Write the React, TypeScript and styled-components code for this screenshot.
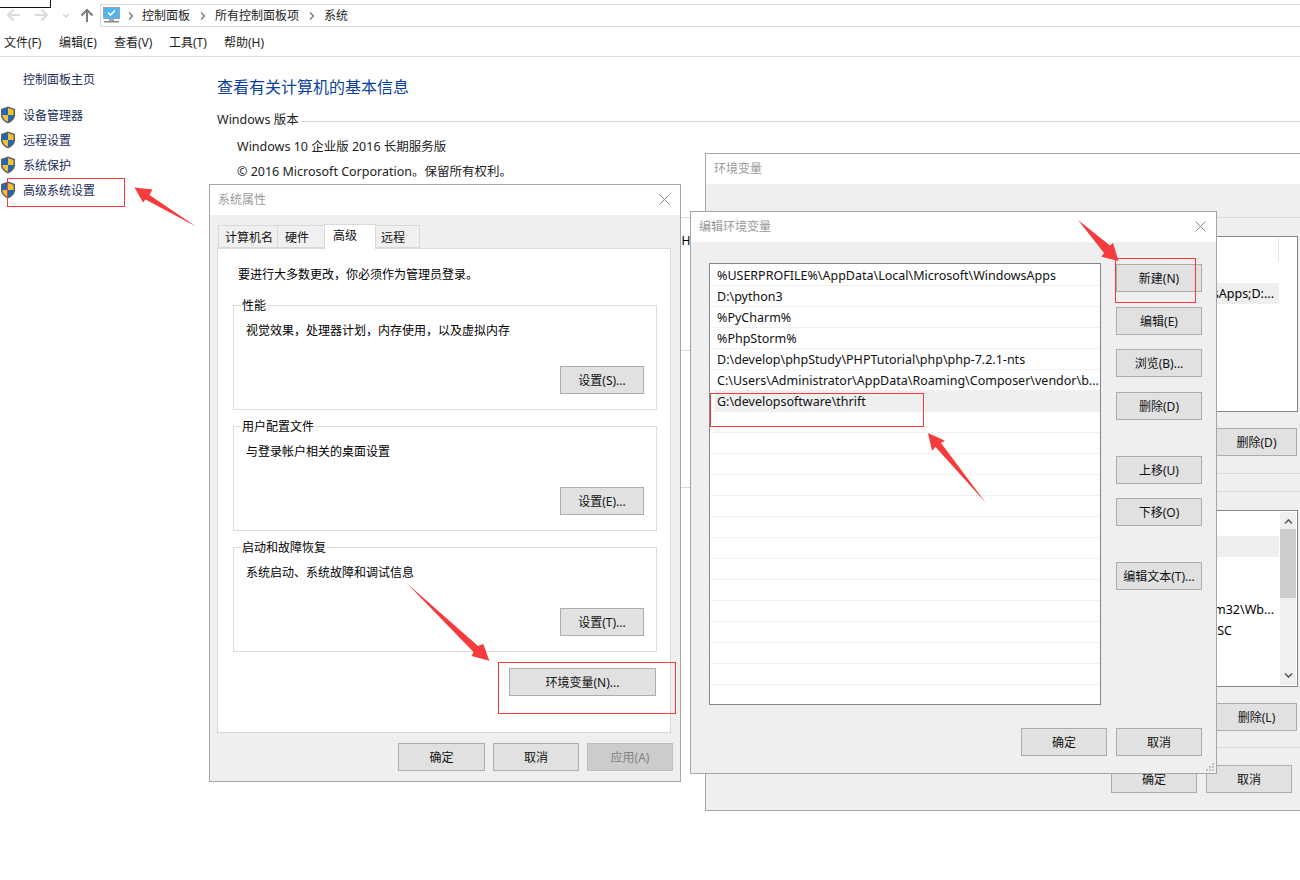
import React from "react";
import styled, { createGlobalStyle } from "styled-components";

const Global = createGlobalStyle`
  html, body { margin: 0; padding: 0; background: #fff; }
  body { font-family: "Noto Sans", "Noto Sans CJK SC", sans-serif; font-size: 12px; color: #000; }
  * { box-sizing: border-box; }
`;

const Page = styled.div`
  position: relative;
  width: 1300px;
  height: 880px;
  overflow: hidden;
  background: #fff;
`;

const Fragment = styled.div`
  position: absolute;
  left: -1px;
  top: -1px;
  width: 52px;
  height: 9px;
  border: 1px solid #111;
`;

const NavBar = styled.div`
  display: flex;
  align-items: center;
  height: 27px;
  padding-left: 5px;
`;

const NavIcons = styled.div`
  display: flex;
  align-items: center;
  width: 95px;
  height: 27px;
`;

const Address = styled.div`
  flex: 1;
  height: 23px;
  margin-top: 8px;
  margin-bottom: 4px;
  padding: 0 0 0 2px;
  display: flex;
  align-items: center;
  border-top: 1px solid #d9d9d9;
  border-left: 1px solid #d9d9d9;
  border-bottom: 1px solid #d9d9d9;
`;

const Crumb = styled.span`
  color: #222;
  font-size: 12px;
  line-height: 20px;
  white-space: nowrap;
`;

const CrumbSep = styled.span`
  display: flex;
  align-items: center;
  justify-content: center;
  width: ${(p: { $w: number }) => p.$w}px;
`;

const MenuBar = styled.div`
  display: flex;
  align-items: center;
  height: 30px;
  padding-left: 4px;
  border-bottom: 1px solid #dcdcdc;
`;

const MenuItem = styled.span`
  width: 55px;
  color: #1e1e1e;
  font-size: 12px;
  white-space: nowrap;
`;

const Main = styled.div`
  display: flex;
`;

const Sidebar = styled.nav`
  width: 217px;
  flex: none;
  padding-top: 11px;
`;

const HomeLink = styled.div`
  height: 24px;
  line-height: 24px;
  padding-left: 23px;
  margin-bottom: 10px;
  color: #1a2c5a;
  font-size: 12px;
`;

const SideLink = styled.div`
  display: flex;
  align-items: center;
  height: 25px;
  color: #1a2c5a;
  font-size: 12px;
`;

const ShieldSlot = styled.span`
  display: flex;
  width: 23px;
  flex: none;
`;

const Content = styled.section`
  flex: 1;
  min-width: 0;
  padding-top: 19px;
`;

const PageTitle = styled.h1`
  margin: 0;
  height: 22px;
  line-height: 22px;
  font-size: 16px;
  font-weight: 400;
  color: #0b3f9e;
`;

const SectionHead = styled.div`
  display: flex;
  align-items: center;
  gap: 2px;
  height: 20px;
  margin-top: 10px;
  margin-bottom: 6px;
  font-size: 12.5px;
  color: #222;
  white-space: nowrap;
`;

const SectionRule = styled.span`
  flex: 1;
  height: 1px;
  background: #d4d4d4;
  transform: translateY(3px);
`;

const InfoLine = styled.div`
  height: 25px;
  line-height: 25px;
  padding-left: 20px;
  font-size: 12.5px;
  color: #222;
  white-space: nowrap;
`;

const CutLine = styled.div`
  width: 479px;
  height: 20px;
  margin-top: ${(p: { $mt: number }) => p.$mt}px;
  line-height: 20px;
  font-size: 12px;
  text-align: right;
  white-space: nowrap;
  overflow: hidden;
`;

const Rule = styled.div`
  height: 1px;
  margin-top: ${(p: { $mt: number }) => p.$mt}px;
  background: #d9d9d9;
`;

const Win = styled.div<{ $x: number; $y: number; $w: number; $h: number }>`
  position: absolute;
  left: ${(p) => p.$x}px;
  top: ${(p) => p.$y}px;
  width: ${(p) => p.$w}px;
  height: ${(p) => p.$h}px;
  display: flex;
  flex-direction: column;
  background: #efefef;
  border: 1px solid #a6a6a6;
`;

const TitleBar = styled.div`
  flex: none;
  height: 30px;
  display: flex;
  align-items: center;
  justify-content: space-between;
  padding: 0 10px 2px 8px;
  background: #fff;
  color: #9a9a9a;
  font-size: 12px;
`;

const Tabs = styled.div`
  display: flex;
  align-items: flex-end;
  height: 33px;
  padding-left: 9px;
`;

const Tab = styled.div<{ $w: number; $px: number; $on?: boolean }>`
  width: ${(p) => p.$w}px;
  height: ${(p) => (p.$on ? 25 : 23)}px;
  margin-bottom: ${(p) => (p.$on ? -1 : 0)}px;
  padding-top: ${(p) => (p.$on ? 3 : 4)}px;
  padding-left: ${(p) => p.$px}px;
  position: relative;
  background: ${(p) => (p.$on ? "#fff" : "#f0f0f0")};
  border: 1px solid #d9d9d9;
  border-bottom: ${(p) => (p.$on ? "none" : "1px solid #d9d9d9")};
  margin-left: -1px;
  font-size: 12px;
  line-height: 16px;
  color: #111;
  z-index: ${(p) => (p.$on ? 2 : 1)};
`;

const Pane = styled.div`
  margin-left: 7px;
  width: 454px;
  height: 485px;
  padding: 17px 13px 0 15px;
  background: #fff;
  border: 1px solid #d9d9d9;
`;

const Intro = styled.p`
  margin: 0 0 21px 5px;
  height: 18px;
  line-height: 18px;
  font-size: 12px;
`;

const Group = styled.div`
  position: relative;
  display: flex;
  flex-direction: column;
  justify-content: space-between;
  height: 105px;
  margin-bottom: 16px;
  padding: 16px 12px 15px 12px;
  border: 1px solid #dcdcdc;
`;

const Legend = styled.span`
  position: absolute;
  left: 7px;
  top: -8px;
  padding: 0 1px;
  line-height: 16px;
  background: #fff;
  font-size: 12px;
`;

const GroupText = styled.div`
  line-height: 18px;
  font-size: 12px;
`;

const RightRow = styled.div<{ $pr?: number; $gap?: number; $mt?: number }>`
  display: flex;
  justify-content: flex-end;
  gap: ${(p) => p.$gap ?? 9}px;
  padding-right: ${(p) => p.$pr ?? 0}px;
  margin-top: ${(p) => p.$mt ?? 0}px;
`;

const Btn = styled.div<{ $w?: number; $mt?: number; $off?: boolean }>`
  flex: none;
  width: ${(p) => p.$w ?? 86}px;
  height: 28px;
  margin-top: ${(p) => p.$mt ?? 0}px;
  padding-bottom: 1px;
  display: flex;
  align-items: center;
  justify-content: center;
  background: ${(p) => (p.$off ? "#ccc" : "#e1e1e1")};
  border: 1px solid ${(p) => (p.$off ? "#bfbfbf" : "#adadad")};
  color: ${(p) => (p.$off ? "#838383" : "#111")};
  font-size: 12px;
  white-space: nowrap;
`;

const EditBody = styled.div`
  flex: 1;
  position: relative;
  padding: 21px 14px 0 18px;
`;

const EditTop = styled.div`
  display: flex;
  gap: 15px;
`;

const ListBox = styled.div`
  width: 392px;
  height: 442px;
  padding-top: 1px;
  background: #fff;
  border: 1px solid #82878f;
`;

const PathRow = styled.div`
  display: flex;
  height: 21px;
  margin-left: 1px;
  padding-left: 4px;
  border-bottom: 1px solid #f0f0f0;
`;

const PathCell = styled.div<{ $sel?: boolean }>`
  flex: 1;
  padding-left: 2px;
  line-height: 21px;
  font-size: 12.5px;
  color: #111;
  white-space: nowrap;
  background: ${(p) => (p.$sel ? "#efefef" : "transparent")};
`;

const BtnCol = styled.div`
  display: flex;
  flex-direction: column;
  padding-top: 1px;
`;

const Grip = styled.svg`
  position: absolute;
  right: 1px;
  bottom: 1px;
`;

const BackBody = styled.div`
  padding: 33px 0 0 0;
`;

const BackList = styled.div<{ $h: number; $mt: number }>`
  position: relative;
  width: 592px;
  height: ${(p) => p.$h}px;
  margin-top: ${(p) => p.$mt}px;
  background: #fff;
  border: 1px solid #82878f;
`;

const HeadDivider = styled.div`
  position: absolute;
  right: 18px;
  top: 1px;
  width: 1px;
  height: 24px;
  background: #e5e5e5;
`;

const BackRow = styled.div<{ $top: number; $pad: number; $sel?: boolean }>`
  position: absolute;
  left: 0;
  right: 18px;
  top: ${(p) => p.$top}px;
  height: 21px;
  padding-right: ${(p) => p.$pad}px;
  line-height: 21px;
  text-align: right;
  font-size: 12.5px;
  white-space: nowrap;
  overflow: hidden;
  background: ${(p) => (p.$sel ? "#efefef" : "transparent")};
`;

const Scroll = styled.div`
  position: absolute;
  right: 1px;
  top: 1px;
  bottom: 1px;
  width: 16px;
  display: flex;
  flex-direction: column;
  justify-content: space-between;
  align-items: center;
  background: #f0f0f0;
  padding: 6px 0;
`;

const Thumb = styled.div`
  position: absolute;
  left: 0;
  top: 17px;
  width: 16px;
  height: 69px;
  background: #cdcdcd;
`;

const RedBox = styled.div<{ $x: number; $y: number; $w: number; $h: number }>`
  position: absolute;
  left: ${(p) => p.$x}px;
  top: ${(p) => p.$y}px;
  width: ${(p) => p.$w}px;
  height: ${(p) => p.$h}px;
  border: 1px solid #f43a3a;
`;

const ArrowLayer = styled.svg`
  position: absolute;
  left: 0;
  top: 0;
  pointer-events: none;
`;

const Shield = () => (
  <svg width="16" height="18" viewBox="0 0 16 18">
    <path d="M8 .5 15 3v6c0 4-3 6.800-7 8.500C4 15.800 1 13 1 9V3Z" fill="#56616b" />
    <path d="M8 2 2.500 4v5H8Z" fill="#2067b8" />
    <path d="M8 2l5.500 2v5H8Z" fill="#fbbf2e" />
    <path d="M2.500 9H8v6.800C5 14.500 2.600 12.500 2.500 9Z" fill="#fbbf2e" />
    <path d="M13.500 9H8v6.800c3-1.300 5.400-3.300 5.500-6.800Z" fill="#2067b8" />
  </svg>
);

const NavArrows = () => (
  <svg width="95" height="27" viewBox="0 0 95 27">
    <path d="M13 15H1M6.500 9.500 1 15l5.500 5.500" transform="translate(2 0)" fill="none" stroke="#dcdcdc" strokeWidth="2" />
    <path d="M31 15h12M37.500 9.500 43 15l-5.500 5.500" transform="translate(-1 0)" fill="none" stroke="#dcdcdc" strokeWidth="2" />
    <path d="M58 14l3 3 3-3" fill="none" stroke="#d4d4d4" strokeWidth="1.500" />
    <path d="M82 22V10M76.500 15.500 82 10l5.500 5.500" fill="none" stroke="#7a7a7a" strokeWidth="2" />
  </svg>
);

const PcIcon = () => (
  <svg width="17" height="17" viewBox="0 0 17 17">
    <rect x=".5" y=".5" width="16" height="11" fill="#54b4ee" stroke="#8fa9bd" />
    <path d="M5 5.500 7.500 8 12 3.500" fill="none" stroke="#fff" strokeWidth="1.600" />
    <rect x="6" y="12" width="5" height="2" fill="#9aa7b1" />
    <rect x="1" y="14" width="15" height="1.500" fill="#7f8b95" />
  </svg>
);

const CrumbArrow = () => (
  <svg width="6" height="8" viewBox="0 0 6 8">
    <path d="M1 .5 4.500 4 1 7.500" fill="none" stroke="#777" strokeWidth="1.300" />
  </svg>
);

const CloseX = () => (
  <svg width="11" height="11" viewBox="0 0 11 11">
    <path d="M.5.500l10 10M10.500.500l-10 10" stroke="#8a8a8a" strokeWidth="1" fill="none" />
  </svg>
);

const Chevron = ({ up }: { up?: boolean }) => (
  <svg width="9" height="7" viewBox="0 0 9 7">
    <path d={up ? "M1 5.500 4.500 2 8 5.500" : "M1 1.500 4.500 5 8 1.500"} fill="none" stroke="#606060" strokeWidth="1.700" />
  </svg>
);

const paths = [
  "%USERPROFILE%\\AppData\\Local\\Microsoft\\WindowsApps",
  "D:\\python3",
  "%PyCharm%",
  "%PhpStorm%",
  "D:\\develop\\phpStudy\\PHPTutorial\\php\\php-7.2.1-nts",
  "C:\\Users\\Administrator\\AppData\\Roaming\\Composer\\vendor\\b...",
  "G:\\developsoftware\\thrift",
  ...Array.from({ length: 13 }, () => ""),
];

const groups = [
  { t: "性能", d: "视觉效果，处理器计划，内存使用，以及虚拟内存", b: "设置(S)..." },
  { t: "用户配置文件", d: "与登录帐户相关的桌面设置", b: "设置(E)..." },
  { t: "启动和故障恢复", d: "系统启动、系统故障和调试信息", b: "设置(T)..." },
];

export default function App() {
  return (
    <Page>
      <Global />
      <Fragment />
      <NavBar>
        <NavIcons>
          <NavArrows />
        </NavIcons>
        <Address>
          <PcIcon />
          <CrumbSep $w={22}>
            <CrumbArrow />
          </CrumbSep>
          <Crumb>控制面板</Crumb>
          <CrumbSep $w={25}>
            <CrumbArrow />
          </CrumbSep>
          <Crumb>所有控制面板项</Crumb>
          <CrumbSep $w={25}>
            <CrumbArrow />
          </CrumbSep>
          <Crumb>系统</Crumb>
        </Address>
      </NavBar>
      <MenuBar>
        {["文件(F)", "编辑(E)", "查看(V)", "工具(T)", "帮助(H)"].map((m) => (
          <MenuItem key={m}>{m}</MenuItem>
        ))}
      </MenuBar>
      <Main>
        <Sidebar>
          <HomeLink>控制面板主页</HomeLink>
          {["设备管理器", "远程设置", "系统保护", "高级系统设置"].map((s) => (
            <SideLink key={s}>
              <ShieldSlot>
                <Shield />
              </ShieldSlot>
              {s}
            </SideLink>
          ))}
        </Sidebar>
        <Content>
          <PageTitle>查看有关计算机的基本信息</PageTitle>
          <SectionHead>
            Windows 版本
            <SectionRule />
          </SectionHead>
          <InfoLine>Windows 10 企业版 2016 长期服务版</InfoLine>
          <InfoLine>© 2016 Microsoft Corporation。保留所有权利。</InfoLine>
          <Rule $mt={33} />
          <CutLine $mt={13}>2.30GHz</CutLine>
          <Rule $mt={99} />
          <Rule $mt={136} />
        </Content>
      </Main>

      <Win $x={209} $y={184} $w={472} $h={598}>
        <TitleBar>
          系统属性
          <CloseX />
        </TitleBar>
        <Tabs>
          <Tab $w={60} $px={6}>计算机名</Tab>
          <Tab $w={48} $px={7}>硬件</Tab>
          <Tab $w={52} $px={8} $on>
            高级
          </Tab>
          <Tab $w={45} $px={5}>远程</Tab>
        </Tabs>
        <Pane>
          <Intro>要进行大多数更改，你必须作为管理员登录。</Intro>
          {groups.map((g) => (
            <Group key={g.t}>
              <Legend>{g.t}</Legend>
              <GroupText>{g.d}</GroupText>
              <RightRow>
                <Btn $w={84}>{g.b}</Btn>
              </RightRow>
            </Group>
          ))}
          <RightRow $pr={1}>
            <Btn $w={147}>环境变量(N)...</Btn>
          </RightRow>
        </Pane>
        <RightRow $pr={7} $gap={8} $mt={10}>
          <Btn $w={87}>确定</Btn>
          <Btn>取消</Btn>
          <Btn $off>应用(A)</Btn>
        </RightRow>
      </Win>

      <Win $x={705} $y={153} $w={640} $h={658}>
        <TitleBar>环境变量</TitleBar>
        <BackBody>
          <Rule $mt={0} />
          <BackList $h={176} $mt={18}>
            <HeadDivider />
            <BackRow $top={46} $pad={5} $sel>
              WindowsApps;D:...
            </BackRow>
          </BackList>
          <RightRow $pr={47} $mt={16}>
            <Btn $w={81}>删除(D)</Btn>
          </RightRow>
          <Rule $mt={17} />
          <Rule $mt={17} />
          <BackList $h={177} $mt={18}>
            <BackRow $top={25} $pad={0} $sel />
            <BackRow $top={88} $pad={5}>
              Windows\system32\Wb...
            </BackRow>
            <BackRow $top={109} $pad={47}>
              Liberation SC
            </BackRow>
            <Scroll>
              <Chevron up />
              <Thumb />
              <Chevron />
            </Scroll>
          </BackList>
          <RightRow $pr={47} $mt={16}>
            <Btn $w={81}>删除(L)</Btn>
          </RightRow>
          <Rule $mt={16} />
          <RightRow $pr={52} $mt={17}>
            <Btn>确定</Btn>
            <Btn>取消</Btn>
          </RightRow>
        </BackBody>
      </Win>

      <Win $x={690} $y={211} $w={527} $h={563}>
        <TitleBar>
          编辑环境变量
          <CloseX />
        </TitleBar>
        <EditBody>
          <EditTop>
            <ListBox>
              {paths.map((p, i) => (
                <PathRow key={i}>
                  <PathCell $sel={i === 6}>{p}</PathCell>
                </PathRow>
              ))}
            </ListBox>
            <BtnCol>
              <Btn>新建(N)</Btn>
              <Btn $mt={15}>编辑(E)</Btn>
              <Btn $mt={14}>浏览(B)...</Btn>
              <Btn $mt={15}>删除(D)</Btn>
              <Btn $mt={36}>上移(U)</Btn>
              <Btn $mt={14}>下移(O)</Btn>
              <Btn $mt={36}>编辑文本(T)...</Btn>
            </BtnCol>
          </EditTop>
          <RightRow $gap={9} $mt={23}>
            <Btn>确定</Btn>
            <Btn>取消</Btn>
          </RightRow>
          <Grip width="10" height="10" viewBox="0 0 10 10">
            <path d="M7 1h2v2H7zM4 4h2v2H4zM7 4h2v2H7zM1 7h2v2H1zM4 7h2v2H4zM7 7h2v2H7z" fill="#c4c4c4" />
          </Grip>
        </EditBody>
      </Win>

      <RedBox $x={7} $y={178} $w={118} $h={29} />
      <RedBox $x={498} $y={662} $w={178} $h={52} />
      <RedBox $x={1115} $y={258} $w={81} $h={45} />
      <RedBox $x={710} $y={393} $w={214} $h={34} />

      <ArrowLayer width="1300" height="880" viewBox="0 0 1300 880">
        <g fill="#f53b3b">
          <polygon points="134.500,187.500 152.500,189.500 149.500,195 196,226.500 145.500,199.500 143,202.500" />
          <polygon points="406,582.500 478,646 483.300,644 489.300,660.700 471.700,656 473.500,652" />
          <polygon points="1078,220 1110,245.500 1113,243 1118.500,261 1101.500,256.700 1104,253" />
          <polygon points="928,433 945,440.700 941,443 986,503 935.500,447 932,450.700" />
        </g>
      </ArrowLayer>
    </Page>
  );
}
